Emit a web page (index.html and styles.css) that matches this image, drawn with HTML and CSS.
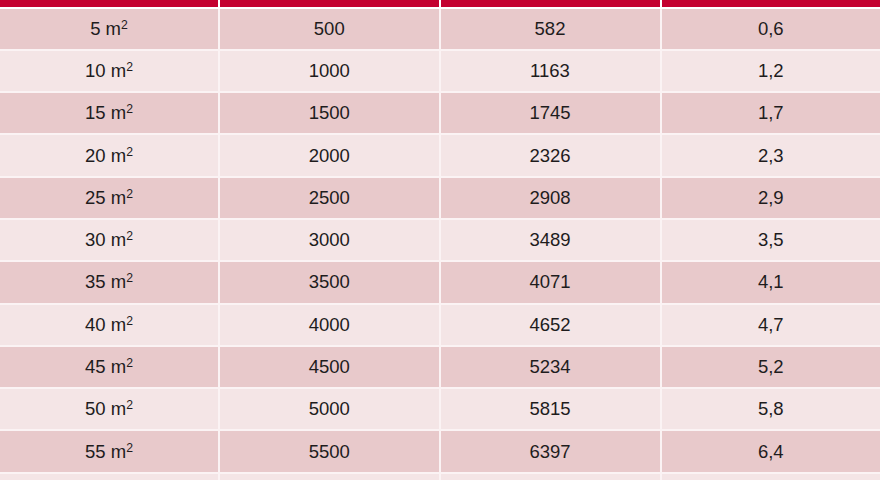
FILE: index.html
```html
<!DOCTYPE html>
<html lang="de">
<head>
<meta charset="utf-8">
<title>Tabelle</title>
<link rel="stylesheet" href="styles.css">
</head>
<body>
<table class="tbl">
  <colgroup>
    <col class="c1"><col class="c2"><col class="c3"><col class="c4">
  </colgroup>
  <thead>
    <tr class="head"><th></th><th></th><th></th><th></th></tr>
  </thead>
  <tbody>
    <tr class="dark"><td>5 m<sup>2</sup></td><td>500</td><td>582</td><td>0,6</td></tr>
    <tr class="light"><td>10 m<sup>2</sup></td><td>1000</td><td>1163</td><td>1,2</td></tr>
    <tr class="dark"><td>15 m<sup>2</sup></td><td>1500</td><td>1745</td><td>1,7</td></tr>
    <tr class="light"><td>20 m<sup>2</sup></td><td>2000</td><td>2326</td><td>2,3</td></tr>
    <tr class="dark"><td>25 m<sup>2</sup></td><td>2500</td><td>2908</td><td>2,9</td></tr>
    <tr class="light"><td>30 m<sup>2</sup></td><td>3000</td><td>3489</td><td>3,5</td></tr>
    <tr class="dark"><td>35 m<sup>2</sup></td><td>3500</td><td>4071</td><td>4,1</td></tr>
    <tr class="light"><td>40 m<sup>2</sup></td><td>4000</td><td>4652</td><td>4,7</td></tr>
    <tr class="dark"><td>45 m<sup>2</sup></td><td>4500</td><td>5234</td><td>5,2</td></tr>
    <tr class="light"><td>50 m<sup>2</sup></td><td>5000</td><td>5815</td><td>5,8</td></tr>
    <tr class="dark"><td>55 m<sup>2</sup></td><td>5500</td><td>6397</td><td>6,4</td></tr>
    <tr class="light"><td></td><td></td><td></td><td></td></tr>
  </tbody>
</table>
</body>
</html>
```

FILE: styles.css
```css
html, body {
  margin: 0;
  padding: 0;
  background: #ffffff;
  overflow: hidden;
}

.tbl {
  width: 880px;
  border-collapse: separate;
  border-spacing: 0;
  table-layout: fixed;
  font-family: "Liberation Sans", Arial, sans-serif;
  font-size: 18.5px;
  color: #1e1c1d;
}

.c1 { width: 218px; }
.c2 { width: 220.5px; }
.c3 { width: 221px; }
.c4 { width: 220.5px; }

.head th {
  box-sizing: border-box;
  height: 8.5px;
  padding: 0;
  background: #c4002f;
  border-left: 2px solid #ffffff;
  border-bottom: 2.5px solid #ffffff;
}

.head th:first-child,
.tbl td:first-child {
  border-left: none;
}

.tbl td {
  box-sizing: border-box;
  height: 42.3px;
  padding: 0;
  text-align: center;
  vertical-align: middle;
  border-left: 2px solid #fbf3f4;
  border-bottom: 2px solid #fbf3f4;
}

.dark td { background: #e8c9cb; }
.light td { background: #f4e5e6; }

.tbl sup {
  font-size: 0.66em;
  line-height: 0;
  vertical-align: 0.5em;
}
```
